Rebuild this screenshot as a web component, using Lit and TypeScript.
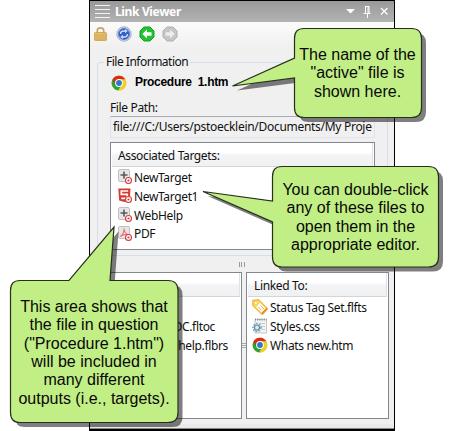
import { LitElement, html, css, svg, nothing } from "lit";
import { customElement, property } from "lit/decorators.js";

const chrome = svg`
  <circle cx="8" cy="8" r="7.4" fill="#e8c81c"/>
  <path d="M8 8 1.6 4.3A7.4 7.4 0 0 0 7.2 15.4L10.8 9.6Z" fill="#2da33c"/>
  <path d="M8 8 4.6 10 1.6 4.3A7.4 7.4 0 0 1 14.4 4.4L8 4.4Z" fill="#d92a1c"/>
  <path d="M8 4.4H14.4A7.4 7.4 0 0 1 7.4 15.4L11.2 9.7Z" fill="#f2cf25"/>
  <circle cx="8" cy="8" r="3.9" fill="#fff"/><circle cx="8" cy="8" r="2.9" fill="#2b78c6"/>`;
const badge = svg`<circle cx="10.500" cy="11.500" r="3" fill="#fff" stroke="#d43c40" stroke-width="1.1"/><circle cx="10.500" cy="11.500" r="1.100" fill="#d43c40"/>`;
const tile = svg`<rect x=".5" y=".5" width="11" height="12" rx="1.5" fill="#e6e6e6" stroke="#c0c0c0"/>`;

const icons: Record<string, unknown> = {
  chrome,
  plus: svg`${tile}<path d="M6 2.500v7M2.500 6h7" stroke="#5a5a5a" stroke-width="1.600"/>${badge}`,
  html5: svg`<path d="M.3 .5h12.2l-.8 11.500L6.500 14 1.200 12.500Z" fill="#d63a2e"/><path d="M10.200 3H3.300v3.400h6v4H3.300" fill="none" stroke="#fff" stroke-width="1.7"/>${badge}`,
  pdf: svg`${tile}<path d="M2 10.500C5 9 6.500 5 6 2.500 6.500 7 8.500 8.500 11 8.500 7.500 7.500 4.500 9 2 10.500Z" fill="none" stroke="#f0686a" stroke-width="1.1"/>${badge}`,
  tag: svg`<path d="M1 1.500 6.500 1 15 9.500 10 15 1 6.500Z" fill="#fff" stroke="#f5bd3a" stroke-width="1.700"/><path d="M15 9.500 10 15" stroke="#ee8b25" stroke-width="2"/><path d="M2 2 6 2 8 4 4 8 2 6Z" fill="#fbd35a"/><path d="M6.500 8 9.500 11M8.500 6.500 12 10" stroke="#f3a93a" stroke-width="1"/><circle cx="3.900" cy="3.900" r="1" fill="#fff"/>`,
  css: svg`<path d="M3 1.500H14.500V15H3Z" fill="#f3f3f3" stroke="#c3c6ca"/><path d="M3 1.500H14.500" stroke="#888" stroke-dasharray="1 1.200" stroke-width="2"/><path d="M8 5.500h5M10 8.500h3M10 11.500h3" stroke="#c8c8c8"/><circle cx="5" cy="9.500" r="4" fill="none" stroke="#7fa6b4" stroke-width="1.600" stroke-dasharray="1.700 1.200"/><circle cx="5" cy="9.500" r="2.500" fill="#dcebf0" stroke="#568ea2" stroke-width="1.200"/>`,
  lock: svg`<path d="M4.300 7V4.500Q4.300 1.800 7.500 1.800T10.700 4.500V7" fill="none" stroke="#c5a56a" stroke-width="1.700"/><rect x="1.500" y="6.500" width="12" height="8" rx=".8" fill="#e8bf6c" stroke="#c99d4c" stroke-width=".8"/><path d="M2 9h11M2 11.200h11M2 13.200h11" stroke="#cda151" stroke-width=".8"/>`,
  refresh: svg`<circle cx="8" cy="8" r="7.200" fill="#d5d9e4" stroke="#a4abc0"/><circle cx="8" cy="8" r="5.500" fill="#2f60c4" stroke="#5b80d0"/><path d="M4.500 8Q4.500 5 8 5h1.500M11.500 8Q11.500 11 8 11H6.500" fill="none" stroke="#cfdfff" stroke-width="1.400"/><path d="M9 3 11.700 5 9 7.200ZM7 8.800 4.300 11l2.700 2Z" fill="#cfdfff"/>`,
  back: svg`<path d="M5 1h6l4 4v6l-4 4H5l-4-4V5Z" fill="#1fc42f" stroke="#189a2a"/><path d="M8 3.500 3.300 8 8 12.500V9.700H12.500V6.300H8Z" fill="#fff"/>`,
  forward: svg`<path d="M5 1h6l4 4v6l-4 4H5l-4-4V5Z" fill="#c6c6c6" stroke="#b0b0b0"/><path d="M8 3.500 12.700 8 8 12.500V9.700H3.500V6.300H8Z" fill="#ededed"/>`,
};

@customElement("ui-icon")
class UiIcon extends LitElement {
  @property() name = "";
  @property({ type: Number }) size = 16;
  static styles = css`:host { display: block; flex: none; } svg { display: block; }`;
  render() {
    return html`<svg width=${this.size} height=${this.size} viewBox="0 0 16 16">${icons[this.name] ?? nothing}</svg>`;
  }
}

@customElement("call-out")
class CallOut extends LitElement {
  @property({ type: Array }) lines: string[] = [];
  @property() outline = "";
  static styles = css`
    :host { position: absolute; display: flex; flex-direction: column; justify-content: center; box-sizing: border-box; letter-spacing: 0; }
    svg { position: absolute; left: 0; top: 0; overflow: visible; }
    .line { position: relative; height: 18.4px; font: 16px/18.4px "Liberation Sans", Arial, sans-serif; text-align: center; white-space: pre; color: #080808; }
  `;
  render() {
    return html`<svg width="1" height="1">
        <path d=${this.outline} transform="translate(4.500 4.500)" fill="#000" fill-opacity=".5"/>
        <path d=${this.outline} fill="#c2ee86" stroke="#26301c" stroke-width="1.200"/>
      </svg>
      ${this.lines.map((t) => html`<div class="line">${t}</div>`)}`;
  }
}

@customElement("app-root")
class AppRoot extends LitElement {
  static styles = css`
    :host { display: block; position: relative; width: 453px; height: 431px; overflow: hidden; background: #fff; font: 12px/19px "Noto Sans", "Open Sans", sans-serif; color: #111; letter-spacing: -.36px; }
    * { box-sizing: border-box; }
    .panel { margin-left: 89px; width: 306px; height: 431px; border: 1px solid #000; border-bottom-width: 2px; background: #f0f0f0; display: flex; flex-direction: column; }
    .title { height: 21px; flex: none; background: linear-gradient(#999, #b3b3b3); display: flex; align-items: center; color: #fff; font-weight: 700; padding: 0 5px; }
    .grip { width: 15px; height: 13px; margin-right: 5px; background: repeating-linear-gradient(#f3f3f3 0 1px, transparent 1px 4px); }
    .title svg { margin-left: auto; }
    .name { letter-spacing: -.35px; }
    .tools { height: 26px; flex: none; display: flex; gap: 7px; padding: 4px 3px 0; background: linear-gradient(#fbfbfb, #f0f0f0); }
    fieldset { margin: 5px 6px 0 7px; padding: 0 12px; height: 203px; border: 1px solid #d5dfe9; border-radius: 3px; flex: none; min-width: 0; }
    legend { height: 18px; line-height: 17px; padding: 0 2px; margin-left: -6px; letter-spacing: -.5px; }
    .active { display: flex; gap: 8px; align-items: center; height: 19px; margin-top: 2px; padding-left: 1px; font: 700 12px/19px "Liberation Sans", Arial, sans-serif; color: #000; letter-spacing: -.3px; white-space: pre; }
    .label { height: 19px; margin-top: 6px; }
    .field { height: 22px; margin-top: -1px; border: 1px solid #e2e3ea; border-top-color: #abadb3; padding: 0 2px; white-space: nowrap; letter-spacing: -.29px; line-height: 20px; }
    .list { border: 1px solid #828790; background: #fff; }
    .targets { height: 108px; margin-top: 4px; }
    .head { height: 24px; margin: 0 1px; padding-left: 6px; line-height: 25px; background: linear-gradient(#fff 40%, #f2f3f5 55%, #f0f1f3); border-bottom: 1px solid #d5d5d5; border-right: 1px solid #dfe2e6; }
    .row { display: flex; gap: 1px; height: 18.8px; align-items: center; padding-left: 7px; white-space: nowrap; }
    .targets .row { gap: 0; }
    .rows { padding-top: 1px; }
    .split { display: flex; align-items: center; justify-content: center; gap: 1px; height: 16px; flex: none; }
    .split i { width: 1px; height: 5px; background: #999; margin-right: .5px; }
    .lower { display: grid; grid-template-columns: 145px 4px 143px; height: 147px; margin-left: 7px; letter-spacing: -.34px; }
    .vsplit { display: flex; flex-direction: column; align-items: center; justify-content: center; gap: 1px; }
    .vsplit i { width: 4px; height: 1px; background: #aaa; }
    .lower .row { padding-left: 5px; gap: 2px; }
    .left .row { padding-left: 0; justify-content: flex-end; }
    .left .row.toc { padding-right: 26px; }
    .left .row.flbrs { padding-right: 13px; }
    .foot { margin-top: auto; height: 5px; background: #e9e9e9; border-bottom: 1px solid #888; }
    .c1 { left: 294px; top: 28px; width: 127px; height: 89px; padding-top: 2px; }
    .c2 { left: 272px; top: 166px; width: 167px; height: 101px; padding-top: 2px; }
    .c3 { left: 10px; top: 280px; width: 168px; height: 143px; padding-top: 3px; }
  `;
  render() {
    const row = (icon: string, text: string) => html`<div class="row"><ui-icon name=${icon}></ui-icon><span>${text}</span></div>`;
    return html`
      <div class="panel">
        <div class="title"><div class="grip"></div><span class="name">Link Viewer</span>
          <svg width="46" height="13" fill="none" stroke="#fff"><path d="M3 4h9L7.500 8.500Z" fill="#fff" stroke="none"/><path d="M22 1.500h4M22.500 1v7M26 1v7M25 1v7M20.500 8.500h7M24.500 9v4"/><path d="M38 3 44.500 9.500M44.500 3 38 9.500" stroke-width="1.300"/></svg>
        </div>
        <div class="tools">${["lock", "refresh", "back", "forward"].map((n) => html`<ui-icon name=${n}></ui-icon>`)}</div>
        <fieldset>
          <legend>File Information</legend>
          <div class="active"><ui-icon name="chrome"></ui-icon><span>Procedure  1.htm</span></div>
          <div class="label">File Path:</div>
          <div class="field">file:///C:/Users/pstoecklein/Documents/My Proje</div>
          <div class="list targets"><div class="head">Associated Targets:</div>
            <div class="rows">${row("plus", "NewTarget")}${row("html5", "NewTarget1")}${row("plus", "WebHelp")}${row("pdf", "PDF")}</div>
          </div>
        </fieldset>
        <div class="split"><i></i><i></i><i></i></div>
        <div class="lower">
          <div class="list left"><div class="head"></div><div class="rows"><div class="row"></div><div class="row toc">OC.fltoc</div><div class="row flbrs">help.flbrs</div></div></div>
          <div class="vsplit"><i></i><i></i><i></i></div>
          <div class="list"><div class="head">Linked To:</div><div class="rows">${row("tag", "Status Tag Set.flfts")}${row("css", "Styles.css")}${row("chrome", "Whats new.htm")}</div></div>
        </div>
        <div class="foot"></div>
      </div>
      <call-out class="c3" outline="M10 .5H59L104-53 100 .5H158Q168 .5 168 10.500V132.500Q168 142.500 158 142.500H10Q.5 142.500 .5 132.500V10.500Q.5 .5 10 .5Z"
        .lines=${["This area shows that", "the file in question", "(\"Procedure 1.htm\")", "will be included in", "many different", "outputs (i.e., targets)."]}></call-out>
      <call-out class="c2" outline="M10 .5H156.500Q166.500 .5 166.500 10.500V91Q166.500 101 156.500 101H10Q.5 101 .5 91V56L-69 25.500 .5 35V10.500Q.5 .5 10 .5Z"
        .lines=${["You can double-click", "any of these files to", "open them in the", "appropriate editor."]}></call-out>
      <call-out class="c1" outline="M10 .5H117.500Q127.500 .5 127.500 10.500V79.500Q127.500 89.500 117.500 89.500H10Q.5 89.500 .5 79.500V50L-61.500 58 .5 30V10.500Q.5 .5 10 .5Z"
        .lines=${["The name of the", "\"active\" file is", "shown here."]}></call-out>
    `;
  }
}
